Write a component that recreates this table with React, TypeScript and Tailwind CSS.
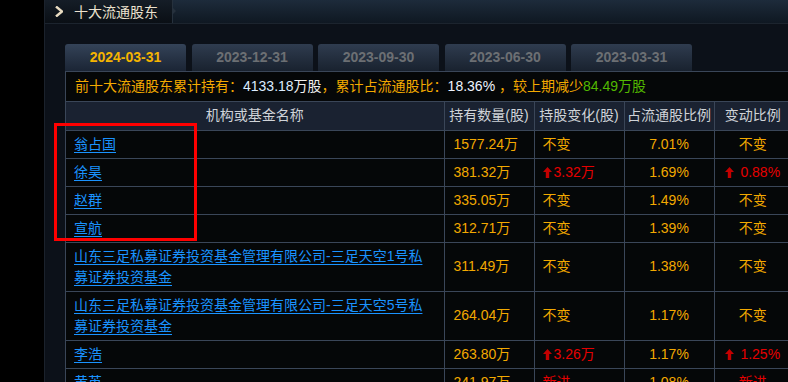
import React from "react";

interface Holder {
  name: React.ReactNode;
  shares: string;
  change: string;
  changeUp?: boolean;
  ratio: string;
  delta: string;
  deltaUp?: boolean;
  isNew?: boolean;
}

const holders: Holder[] = [
  { name: "翁占国", shares: "1577.24万", change: "不变", ratio: "7.01%", delta: "不变" },
  { name: "徐昊", shares: "381.32万", change: "3.32万", changeUp: true, ratio: "1.69%", delta: "0.88%", deltaUp: true },
  { name: "赵群", shares: "335.05万", change: "不变", ratio: "1.49%", delta: "不变" },
  { name: "宣航", shares: "312.71万", change: "不变", ratio: "1.39%", delta: "不变" },
  {
    name: (
      <>
        山东三足私募证券投资基金管理有限公司-三足天空1号私
        <br />
        募证券投资基金
      </>
    ),
    shares: "311.49万",
    change: "不变",
    ratio: "1.38%",
    delta: "不变",
  },
  {
    name: (
      <>
        山东三足私募证券投资基金管理有限公司-三足天空5号私
        <br />
        募证券投资基金
      </>
    ),
    shares: "264.04万",
    change: "不变",
    ratio: "1.17%",
    delta: "不变",
  },
  { name: "李浩", shares: "263.80万", change: "3.26万", changeUp: true, ratio: "1.17%", delta: "1.25%", deltaUp: true },
  { name: "黄英", shares: "241.97万", change: "新进", isNew: true, ratio: "1.08%", delta: "新进" },
];

const tabs = ["2024-03-31", "2023-12-31", "2023-09-30", "2023-06-30", "2023-03-31"];

const UpArrow = () => (
  <svg width="9" height="11" viewBox="0 0 9 11" className="inline-block shrink-0">
    <path d="M4.5 0 L9 5 L6.2 5 L6.2 11 L2.8 11 L2.8 5 L0 5 Z" fill="#c40000" />
  </svg>
);

const App: React.FC = () => {
  return (
    <div
      className="relative flex h-[382px] w-[788px] overflow-hidden bg-black text-[14px]"
      style={{ fontFamily: '"Liberation Sans", "Noto Sans CJK SC", sans-serif' }}
    >
      {/* left gutter */}
      <div className="w-[45px] shrink-0 border-r border-[#1b222c] bg-black" />

      <div className="flex min-w-0 flex-1 flex-col bg-[#0c1119]">
        {/* title bar */}
        <div className="flex h-[24px] shrink-0 border-b border-[#1c242e] bg-gradient-to-b from-[#1d2b3b] to-[#0f1822]">
          <div className="relative flex w-[128px] items-center gap-[11px] border-r border-[#26313d] bg-gradient-to-b from-[#151d27] to-[#0a0f15] pl-[10px]">
            <svg width="8" height="11" viewBox="0 0 8 11">
              <path d="M1 0.5 L7 5.5 L1 10.5" fill="none" stroke="#e9dcc2" strokeWidth="2.4" />
            </svg>
            <span className="leading-none text-[#ece2cf]">十大流通股东</span>
            <span className="absolute right-[-4px] top-[7px] h-0 w-0 border-y-[4px] border-l-[4px] border-y-transparent border-l-[#26313d]" />
          </div>
        </div>

        <div className="flex flex-col pl-[20px] pt-[20px]">
          {/* tabs */}
          <div className="flex h-[27px] gap-[5.5px]">
            {tabs.map((t, i) => (
              <div
                key={t}
                className={
                  i === 0
                    ? "flex w-[121px] items-center justify-center rounded-t-[3px] bg-gradient-to-b from-[#344358] to-[#1b2535] font-bold text-[#f5b400]"
                    : "flex w-[121px] items-center justify-center rounded-t-[3px] bg-gradient-to-b from-[#2f3c4f] to-[#19222f] font-bold text-[#6c6f73]"
                }
              >
                {t}
              </div>
            ))}
          </div>

          {/* summary + table */}
          <div className="w-[726px] border-l border-t border-[#3a4658] bg-[#050708]">
            <div className="flex h-[30px] items-center whitespace-nowrap border-b border-[#3a4658] pl-[9px]">
              <span className="text-[#f3a900]">前十大流通股东累计持有：</span>
              <span className="text-[#dcecff]">4133.18</span>
              <span className="text-[#eeeeee]">万股</span>
              <span className="text-[#f3a900]">，累计占流通股比：</span>
              <span className="text-[#eef4ff]">18.36%</span>
              <span className="text-[#f3a900]">&nbsp;，较上期减少</span>
              <span className="text-[#52b800]">84.49万股</span>
            </div>

            <table className="w-[725px] table-fixed border-collapse">
              <colgroup>
                <col className="w-[378px]" />
                <col className="w-[90px]" />
                <col className="w-[90px]" />
                <col className="w-[90px]" />
                <col className="w-[77px]" />
              </colgroup>
              <thead>
                <tr className="h-[28px] bg-[#1a2231] text-[#cfd3d8]">
                  <th className="border-b border-r border-[#3a4658] font-normal">机构或基金名称</th>
                  <th className="border-b border-r border-[#3a4658] font-normal">持有数量(股)</th>
                  <th className="border-b border-r border-[#3a4658] font-normal">持股变化(股)</th>
                  <th className="border-b border-r border-[#3a4658] font-normal">占流通股比例</th>
                  <th className="border-b border-[#3a4658] font-normal">变动比例</th>
                </tr>
              </thead>
              <tbody>
                {holders.map((h, i) => (
                  <tr key={i} className="leading-[21px]">
                    <td className="border-b border-r border-[#3a4658] py-[3px] pl-[8px]">
                      <span className="text-[#1a93ff] underline underline-offset-[3px]">{h.name}</span>
                    </td>
                    <td className="border-b border-r border-[#3a4658] py-[3px] pl-[9px] text-[#f3a900]">
                      {h.shares}
                    </td>
                    <td className="border-b border-r border-[#3a4658] py-[3px] pl-[8px]">
                      {h.changeUp ? (
                        <span className="flex items-center gap-[2px] text-[#e60000]">
                          <UpArrow />
                          {h.change}
                        </span>
                      ) : (
                        <span className={h.isNew ? "text-[#e60000]" : "text-[#f3a900]"}>{h.change}</span>
                      )}
                    </td>
                    <td className="border-b border-r border-[#3a4658] py-[3px] text-center text-[#f3a900]">
                      {h.ratio}
                    </td>
                    <td className="border-b border-[#3a4658] py-[3px] text-center">
                      {h.deltaUp ? (
                        <span className="flex items-center justify-center gap-[6px] text-[#e60000]">
                          <UpArrow />
                          {h.delta}
                        </span>
                      ) : (
                        <span className={h.isNew ? "text-[#e60000]" : "text-[#f3a900]"}>{h.delta}</span>
                      )}
                    </td>
                  </tr>
                ))}
              </tbody>
            </table>
          </div>
        </div>
      </div>

      {/* highlight annotation */}
      <div className="absolute left-[54px] top-[123px] h-[118px] w-[143px] border-[3.5px] border-[#ff0000]" />
    </div>
  );
};

export default App;
